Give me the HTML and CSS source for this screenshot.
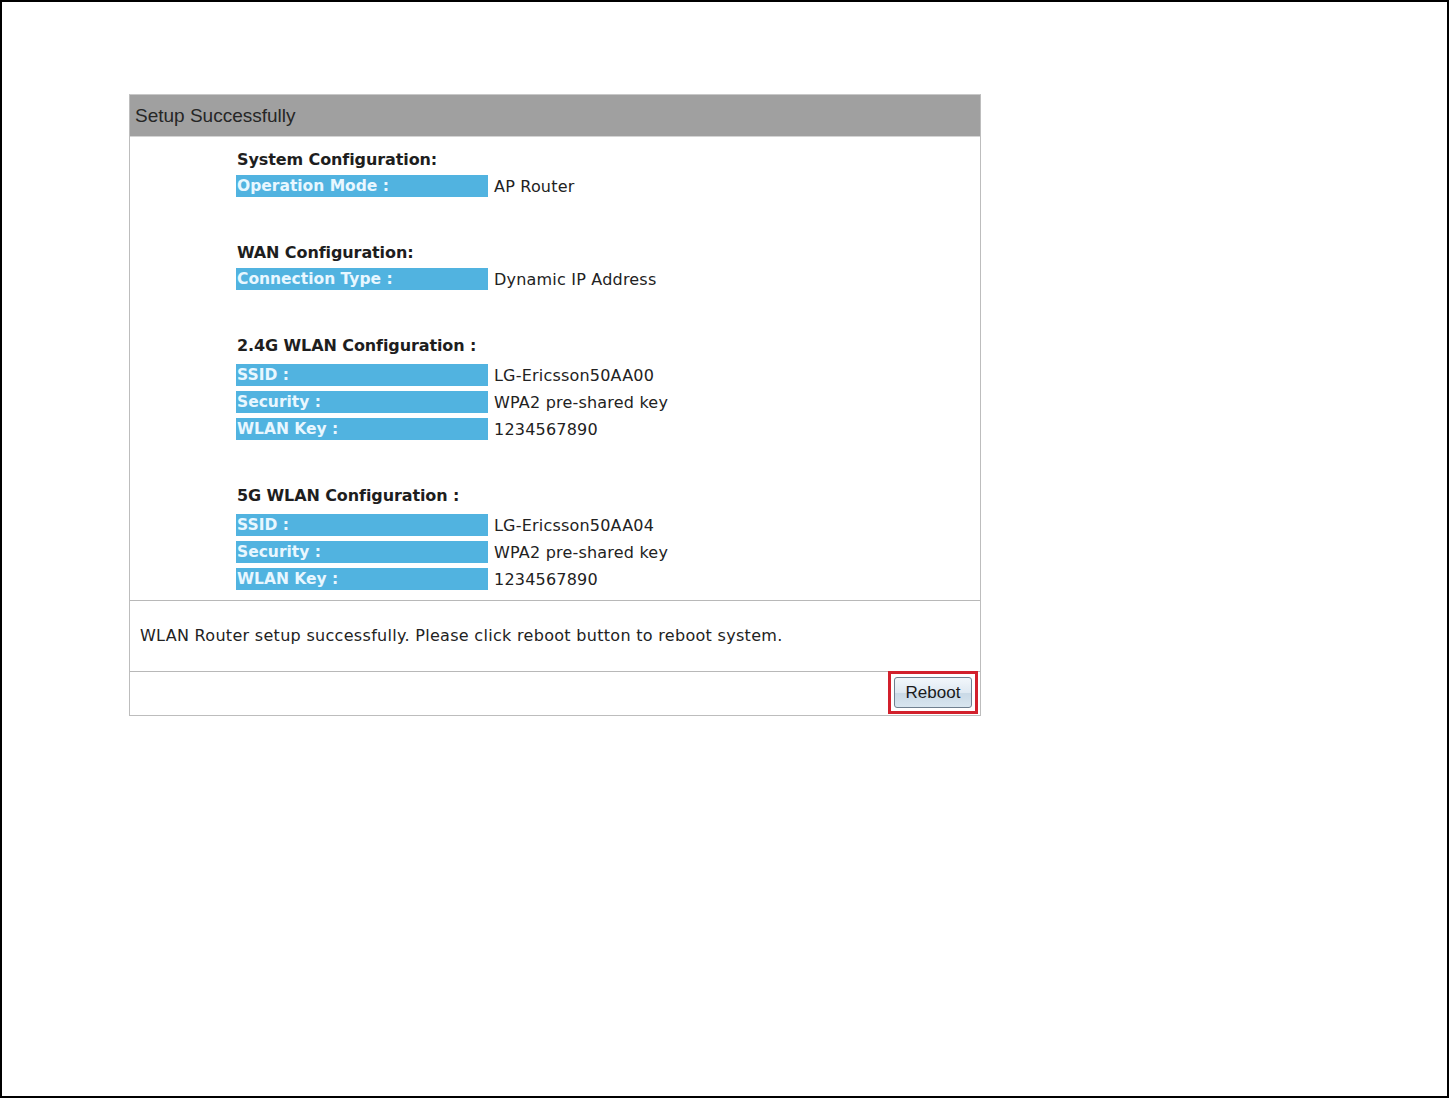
FILE: index.html
```html
<!DOCTYPE html>
<html lang="en">
<head>
  <meta charset="UTF-8" />
  <title>Setup Successfully</title>
  <link rel="stylesheet" href="styles.css">
</head>
<body>
  <div class="frame">
    <div class="panel">
      <div class="panel-head">Setup Successfully</div>

      <div class="panel-body">
        <div class="group">
          <h3>System Configuration:</h3>
          <div class="row"><span class="label">Operation Mode :</span><span class="value">AP Router</span></div>
        </div>

        <div class="group">
          <h3>WAN Configuration:</h3>
          <div class="row"><span class="label">Connection Type :</span><span class="value">Dynamic IP Address</span></div>
        </div>

        <div class="group wlan">
          <h3>2.4G WLAN Configuration :</h3>
          <div class="row"><span class="label">SSID :</span><span class="value">LG-Ericsson50AA00</span></div>
          <div class="row"><span class="label">Security :</span><span class="value">WPA2 pre-shared key</span></div>
          <div class="row"><span class="label">WLAN Key :</span><span class="value">1234567890</span></div>
        </div>

        <div class="group wlan last">
          <h3>5G WLAN Configuration :</h3>
          <div class="row"><span class="label">SSID :</span><span class="value">LG-Ericsson50AA04</span></div>
          <div class="row"><span class="label">Security :</span><span class="value">WPA2 pre-shared key</span></div>
          <div class="row"><span class="label">WLAN Key :</span><span class="value">1234567890</span></div>
        </div>
      </div>

      <div class="panel-msg">WLAN Router setup successfully. Please click reboot button to reboot system.</div>

      <div class="panel-foot">
        <div class="mark">
          <button class="btn">Reboot</button>
        </div>
      </div>
    </div>
  </div>
</body>
</html>
```

FILE: styles.css
```css
* {
  margin: 0;
  padding: 0;
  box-sizing: border-box;
}

body {
  background: #fff;
  font-family: "DejaVu Sans", Verdana, sans-serif;
  color: #1e1e1e;
}

.frame {
  width: 1449px;
  height: 1098px;
  border: 2px solid #000;
  padding: 92px 0 0 127px;
}

.panel {
  width: 852px;
  border: 1px solid #bdbdbd;
  border-top: 1px solid #c8c8c8;
}

.panel-head {
  height: 42px;
  background: #a0a0a0;
  border-bottom: 1px solid #d4d4d4;
  font-family: "Liberation Sans", Arial, sans-serif;
  font-size: 19px;
  line-height: 42px;
  padding-left: 5px;
  color: #262626;
}

.panel-body {
  padding: 13px 0 10px 106px;
  border-bottom: 1px solid #b8b8b8;
}

.group {
  margin-bottom: 46px;
}

.group.last {
  margin-bottom: 0;
}

.group h3 {
  font-size: 16px;
  line-height: 20px;
  font-weight: bold;
  padding-left: 1px;
  letter-spacing: -0.1px;
  margin-bottom: 5px;
}

.group.wlan h3 {
  margin-bottom: 8px;
}

.row {
  display: flex;
  align-items: center;
  height: 22px;
  margin-bottom: 5px;
}

.row:last-child {
  margin-bottom: 0;
}

.label {
  width: 252px;
  height: 22px;
  background: #51b3e0;
  color: #e8f7ff;
  font-weight: bold;
  font-size: 15.5px;
  line-height: 22px;
  padding-left: 1px;
}

.value {
  padding-left: 6px;
  font-size: 16px;
  letter-spacing: 0.2px;
  color: #222;
}

.panel-msg {
  height: 71px;
  line-height: 70px;
  padding-left: 10px;
  font-size: 16px;
  letter-spacing: 0.3px;
  color: #222;
  border-bottom: 1px solid #b8b8b8;
}

.panel-foot {
  height: 43px;
  display: flex;
  justify-content: flex-end;
  align-items: flex-start;
  padding-right: 2px;
}

.mark {
  margin-top: -1px;
  border: 3px solid #d2202c;
  padding: 3px;
  width: 90px;
  height: 43px;
}

.btn {
  width: 78px;
  height: 31px;
  border: 1px solid #6f7f8f;
  border-radius: 3px;
  background: linear-gradient(#f2f7fb, #dfe9f2 50%, #c9d9e6 51%, #d8e5ef);
  font-family: "Liberation Sans", Arial, sans-serif;
  font-size: 17px;
  color: #1a1a1a;
  cursor: pointer;
}
```
